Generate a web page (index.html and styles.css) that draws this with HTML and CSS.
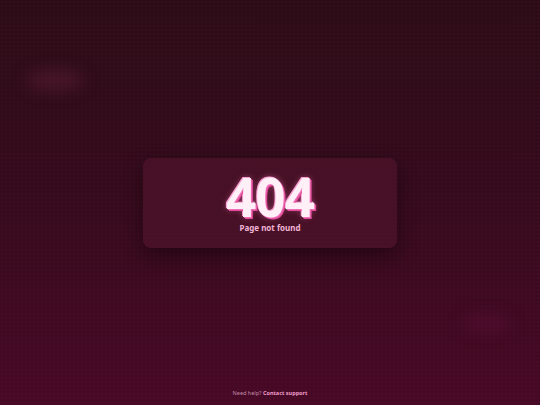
FILE: index.html
```html
<!DOCTYPE html>
<html lang="en">
<head>
<meta charset="utf-8">
<title>404</title>
<link rel="stylesheet" href="styles.css">
</head>
<body>
<div class="page">
  <div class="blob blob-a"></div>
  <div class="blob blob-b"></div>
  <main class="center">
    <section class="card">
      <h1 class="code">404</h1>
      <p class="msg">Page not found</p>
    </section>
  </main>
  <footer class="foot">Need help? <a class="link" href="#">Contact support</a></footer>
</div>
</body>
</html>
```

FILE: styles.css
```css
* { box-sizing: border-box; margin: 0; padding: 0; }
html, body { width: 540px; height: 405px; overflow: hidden; }
body {
  font-family: "Noto Sans", "Open Sans", sans-serif;
  background: linear-gradient(180deg, #2b0c16 0%, #340b1c 45%, #470926 100%);
}
.page {
  position: relative;
  width: 540px;
  height: 405px;
  display: flex;
  flex-direction: column;
  background-image: radial-gradient(rgba(130, 30, 70, 0.1) 0.7px, transparent 1px);
  background-size: 4px 4px;
}
.blob {
  position: absolute;
  border-radius: 50%;
  filter: blur(8px);
}
.blob-a {
  left: 26px; top: 70px; width: 58px; height: 20px;
  background: rgba(110, 40, 65, 0.4);
}
.blob-b {
  left: 462px; top: 315px; width: 50px; height: 16px;
  background: rgba(110, 20, 70, 0.3);
}
.center {
  flex: 1;
  display: flex;
  align-items: center;
  justify-content: center;
}
.card {
  width: 254px;
  height: 90px;
  border-radius: 8px;
  background: rgba(78, 20, 42, 0.72);
  box-shadow: 0 8px 20px rgba(10, 0, 5, 0.45);
  display: flex;
  flex-direction: column;
  align-items: center;
  justify-content: center;
  padding-bottom: 2px;
}
.code {
  font-size: 53px;
  font-weight: 700;
  line-height: 53px;
  color: #fff0f8;
  letter-spacing: -1px;
  text-shadow: 1px 1px 0 #f070b8, 2px 2px 0 #e04a98, -1px -1px 0 #f7a0d0, 0 0 6px rgba(255, 120, 190, 0.55);
}
.msg {
  font-size: 8px;
  line-height: 10px;
  font-weight: 700;
  color: #f2b4d4;
}
.foot {
  position: absolute;
  left: 0; right: 0; bottom: 8px;
  text-align: center;
  font-size: 5.5px;
  color: #c48aa8;
}
.link {
  color: #f09ccb;
  font-weight: 700;
  text-decoration: none;
}
```
